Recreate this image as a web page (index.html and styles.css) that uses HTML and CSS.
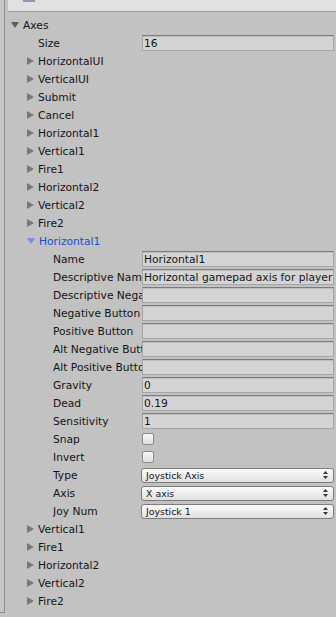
FILE: index.html
```html
<!DOCTYPE html>
<html lang="en">
<head>
    <meta charset="UTF-8">
    <title>Input Manager</title>
    <link rel="stylesheet" href="styles.css">
</head>
<body>
    <div class="page">
        <div class="side"></div>
        <div class="main">
            <div class="topbar"><span class="topicon"></span></div>
            <div class="tree">
                <div class="row lvl0"><span class="arrow down"></span>Axes</div>
                <div class="row lvl1 field"><span class="label">Size</span><input class="text" type="text" value="16"></div>
                <div class="row lvl1"><span class="arrow right"></span>HorizontalUI</div>
                <div class="row lvl1"><span class="arrow right"></span>VerticalUI</div>
                <div class="row lvl1"><span class="arrow right"></span>Submit</div>
                <div class="row lvl1"><span class="arrow right"></span>Cancel</div>
                <div class="row lvl1"><span class="arrow right"></span>Horizontal1</div>
                <div class="row lvl1"><span class="arrow right"></span>Vertical1</div>
                <div class="row lvl1"><span class="arrow right"></span>Fire1</div>
                <div class="row lvl1"><span class="arrow right"></span>Horizontal2</div>
                <div class="row lvl1"><span class="arrow right"></span>Vertical2</div>
                <div class="row lvl1"><span class="arrow right"></span>Fire2</div>
                <div class="row lvl1 selected"><span class="arrow down blue"></span>Horizontal1</div>

                <div class="row lvl2 field"><span class="label">Name</span><input class="text" type="text" value="Horizontal1"></div>
                <div class="row lvl2 field"><span class="label">Descriptive Name</span><input class="text" type="text" value="Horizontal gamepad axis for player"></div>
                <div class="row lvl2 field"><span class="label">Descriptive Negative Name</span><input class="text" type="text" value=""></div>
                <div class="row lvl2 field"><span class="label">Negative Button</span><input class="text" type="text" value=""></div>
                <div class="row lvl2 field"><span class="label">Positive Button</span><input class="text" type="text" value=""></div>
                <div class="row lvl2 field"><span class="label">Alt Negative Button</span><input class="text" type="text" value=""></div>
                <div class="row lvl2 field"><span class="label">Alt Positive Button</span><input class="text" type="text" value=""></div>
                <div class="row lvl2 field"><span class="label">Gravity</span><input class="text" type="text" value="0"></div>
                <div class="row lvl2 field"><span class="label">Dead</span><input class="text" type="text" value="0.19"></div>
                <div class="row lvl2 field"><span class="label">Sensitivity</span><input class="text" type="text" value="1"></div>
                <div class="row lvl2 field"><span class="label">Snap</span><span class="check"></span></div>
                <div class="row lvl2 field"><span class="label">Invert</span><span class="check"></span></div>
                <div class="row lvl2 field"><span class="label">Type</span>
                    <div class="select"><span>Joystick Axis</span>
                        <svg class="updown" width="5" height="8" viewBox="0 0 5 8"><path d="M2.5 0L5 3H0z M2.5 8L0 5h5z" fill="#333"/></svg>
                    </div>
                </div>
                <div class="row lvl2 field"><span class="label">Axis</span>
                    <div class="select"><span>X axis</span>
                        <svg class="updown" width="5" height="8" viewBox="0 0 5 8"><path d="M2.5 0L5 3H0z M2.5 8L0 5h5z" fill="#333"/></svg>
                    </div>
                </div>
                <div class="row lvl2 field"><span class="label">Joy Num</span>
                    <div class="select"><span>Joystick 1</span>
                        <svg class="updown" width="5" height="8" viewBox="0 0 5 8"><path d="M2.5 0L5 3H0z M2.5 8L0 5h5z" fill="#333"/></svg>
                    </div>
                </div>

                <div class="row lvl1"><span class="arrow right"></span>Vertical1</div>
                <div class="row lvl1"><span class="arrow right"></span>Fire1</div>
                <div class="row lvl1"><span class="arrow right"></span>Horizontal2</div>
                <div class="row lvl1"><span class="arrow right"></span>Vertical2</div>
                <div class="row lvl1"><span class="arrow right"></span>Fire2</div>
            </div>
        </div>
    </div>
</body>
</html>
```

FILE: styles.css
```css
html, body {
    margin: 0;
    height: 100%;
    background-color: #c2c2c2;
    font-family: "DejaVu Sans", sans-serif;
    font-size: 10.7px;
    color: #141414;
}

.page {
    display: flex;
    height: 617px;
    overflow: hidden;
}

.side {
    flex: none;
    width: 4px;
    height: 612px;
    background-color: #c5c5c5;
    border-right: 1px solid #8e8e8e;
    border-bottom: 1px solid #8e8e8e;
}

.main {
    flex: 1;
    margin-left: 3px;
    min-width: 0;
}

.topbar {
    height: 11px;
    background-color: #e1e1e1;
    border-bottom: 1px solid #9a9a9a;
    display: flex;
}

.topicon {
    width: 12px;
    height: 2px;
    margin-left: 15px;
    background-color: #8c99ad;
}

.tree {
    padding-top: 4px;
}

.row {
    display: flex;
    align-items: center;
    height: 18px;
    white-space: nowrap;
}

.lvl0 {
    padding-left: 3px;
}

.lvl1 {
    padding-left: 19px;
}

.lvl1.field {
    padding-left: 30px;
}

.lvl2.field {
    padding-left: 45px;
}

.arrow {
    flex: none;
    width: 0;
    height: 0;
    margin-right: 4px;
}

.arrow.down {
    border-top: 6px solid #5e5e5e;
    border-left: 4px solid transparent;
    border-right: 4px solid transparent;
}

.arrow.right {
    border-left: 7px solid #7a7a7a;
    border-top: 4px solid transparent;
    border-bottom: 4px solid transparent;
}

.arrow.down.blue {
    border-top-color: #7090ea;
}

.selected {
    color: #1f48e0;
}

.label {
    flex: none;
    overflow: hidden;
    white-space: nowrap;
}

.lvl1 .label {
    width: 104px;
}

.lvl2 .label {
    width: 89px;
}

.text {
    flex: 1;
    min-width: 0;
    box-sizing: border-box;
    height: 16px;
    margin: 0 2px 0 0;
    padding: 0 0 0 1px;
    font-family: inherit;
    font-size: inherit;
    color: #141414;
    background-color: #d4d4d4;
    border: 1px solid #a6a6a6;
    border-top-color: #7c7c7c;
    box-shadow: inset 0 1px 0 #bdbdbd;
    outline: none;
}

.check {
    box-sizing: border-box;
    width: 12px;
    height: 12px;
    border: 1px solid #8a8a8a;
    border-radius: 2px;
    background: linear-gradient(#f8f8f8, #dedede);
}

.select {
    flex: 1;
    box-sizing: border-box;
    height: 15px;
    margin-right: 2px;
    margin-left: -1px;
    padding: 0 5px 0 4px;
    display: flex;
    align-items: center;
    justify-content: space-between;
    font-size: 9.4px;
    border: 1px solid #7d7d7d;
    border-radius: 3px;
    background: linear-gradient(#fbfbfb, #e0e0e0);
}

.updown {
    flex: none;
}
```
